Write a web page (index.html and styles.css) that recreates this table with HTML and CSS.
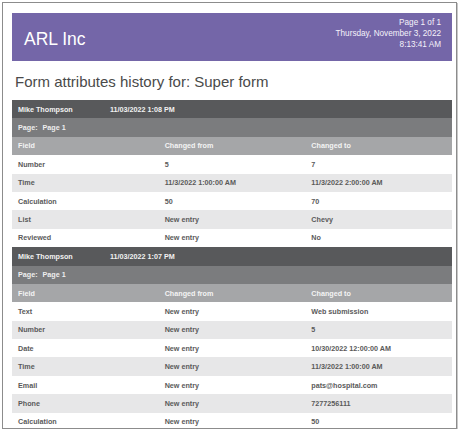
FILE: index.html
```html
<!DOCTYPE html>
<html>
<head>
<meta charset="utf-8">
<link rel="stylesheet" href="styles.css">
</head>
<body>
<div class="page">
  <header class="banner">
    <div class="company">ARL Inc</div>
    <div class="meta">
      <div>Page 1 of 1</div>
      <div>Thursday, November 3, 2022</div>
      <div>8:13:41 AM</div>
    </div>
  </header>
  <h1 class="title">Form attributes history for: Super form</h1>

  <section class="entry">
    <div class="row user"><span class="name">Mike Thompson</span><span>11/03/2022 1:08 PM</span></div>
    <div class="row pagerow"><span class="plabel">Page:</span><span>Page 1</span></div>
    <div class="row grid colhead"><span>Field</span><span>Changed from</span><span>Changed to</span></div>
    <div class="row grid"><span>Number</span><span>5</span><span>7</span></div>
    <div class="row grid alt"><span>Time</span><span>11/3/2022 1:00:00 AM</span><span>11/3/2022 2:00:00 AM</span></div>
    <div class="row grid"><span>Calculation</span><span>50</span><span>70</span></div>
    <div class="row grid alt"><span>List</span><span>New entry</span><span>Chevy</span></div>
    <div class="row grid"><span>Reviewed</span><span>New entry</span><span>No</span></div>
  </section>

  <section class="entry">
    <div class="row user"><span class="name">Mike Thompson</span><span>11/03/2022 1:07 PM</span></div>
    <div class="row pagerow"><span class="plabel">Page:</span><span>Page 1</span></div>
    <div class="row grid colhead"><span>Field</span><span>Changed from</span><span>Changed to</span></div>
    <div class="row grid"><span>Text</span><span>New entry</span><span>Web submission</span></div>
    <div class="row grid alt"><span>Number</span><span>New entry</span><span>5</span></div>
    <div class="row grid"><span>Date</span><span>New entry</span><span>10/30/2022 12:00:00 AM</span></div>
    <div class="row grid alt"><span>Time</span><span>New entry</span><span>11/3/2022 1:00:00 AM</span></div>
    <div class="row grid"><span>Email</span><span>New entry</span><span>pats@hospital.com</span></div>
    <div class="row grid alt"><span>Phone</span><span>New entry</span><span>7277256111</span></div>
    <div class="row grid"><span>Calculation</span><span>New entry</span><span>50</span></div>
  </section>
</div>
</body>
</html>
```

FILE: styles.css
```css
html, body {
  margin: 0;
  padding: 0;
  background: #ffffff;
}
body {
  font-family: "Liberation Sans", Arial, sans-serif;
}
.page {
  margin: 2px 0 0 2px;
  width: 455px;
  height: 427px;
  border: 1px solid #8c8c8c;
  box-shadow: 1px 1px 0 #c8c8c8;
  padding: 10px 4px 0 9px;
  box-sizing: border-box;
  overflow: hidden;
}
.banner {
  display: flex;
  justify-content: space-between;
  align-items: flex-start;
  height: 48px;
  background: #7466a8;
  color: #ffffff;
  padding: 0 11px 0 12px;
  box-sizing: border-box;
}
.company {
  font-size: 17.5px;
  line-height: 20px;
  margin-top: 16px;
}
.meta {
  font-size: 8.2px;
  line-height: 11px;
  text-align: right;
  margin-top: 4px;
  color: #f4f2fa;
}
.title {
  font-size: 15px;
  font-weight: normal;
  color: #4a4a4a;
  margin: 12px 0 0 3px;
  line-height: 18px;
  height: 27px;
}
.entry {
  font-size: 7.2px;
  font-weight: bold;
  color: #5a5a5a;
}
.row {
  height: 18.4px;
  display: flex;
  align-items: center;
  padding-left: 6px;
  box-sizing: border-box;
}
.grid {
  display: grid;
  grid-template-columns: 1fr 1fr 1fr;
  padding-left: 0;
}
.grid span {
  padding-left: 6px;
}
.user {
  background: #58595b;
  color: #f2f2f2;
}
.user .name {
  width: 92px;
}
.pagerow {
  background: #7b7c7e;
  color: #eeeeee;
}
.plabel {
  margin-right: 5px;
}
.colhead {
  background: #a5a6a8;
  color: #f4f4f4;
}
.alt {
  background: #e7e7e8;
}
```
